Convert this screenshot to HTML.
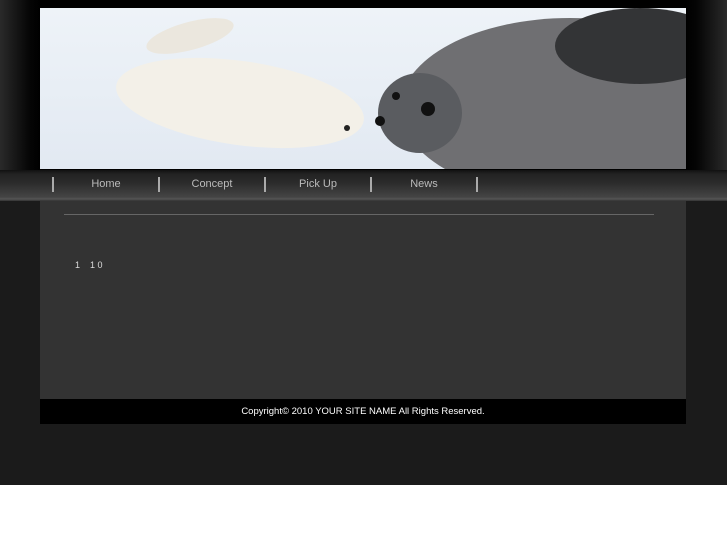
<!DOCTYPE html>
<html><head><style>
body{margin:0;width:727px;height:545px;background:#fff;font-family:"Liberation Sans",sans-serif;position:relative;overflow:hidden}
#bg{position:absolute;left:0;top:0;width:727px;height:485px;background:#1b1b1b}
#top{position:absolute;left:0;top:0;width:727px;height:170px;background:linear-gradient(90deg,#2a2a2a 0,#050505 30px,#000 40px,#000 686px,#050505 697px,#2a2a2a 727px)}
#img{position:absolute;left:40px;top:8px;width:646px;height:161px}
#nav{position:absolute;left:0;top:170px;width:727px;height:31px;background:linear-gradient(#111 0,#222 4px,#2a2a2a 12px,#444 27px,#555 29px,#333 31px)}
.sep{position:absolute;top:7px;width:2px;height:15px;background:#aaa}
.nl{position:absolute;top:8px;font-size:11px;color:#bbb;width:104px;text-align:center}
#main{position:absolute;left:40px;top:201px;width:646px;height:198px;background:#333}
#hr{position:absolute;left:24px;top:13px;width:590px;height:1px;background:#666}
#foot{position:absolute;left:40px;top:399px;width:646px;height:25px;background:#000;color:#fff;font-size:9.5px;text-align:center;line-height:25px}
</style></head><body>
<div id="bg"></div><div id="top"></div>
<svg id="img" viewBox="0 0 646 161">
<defs><linearGradient id="s" x1="0" y1="0" x2="0" y2="1"><stop offset="0" stop-color="#eef3f8"/><stop offset="1" stop-color="#e2e9f2"/></linearGradient></defs>
<rect width="646" height="161" fill="url(#s)"/>
<ellipse cx="200" cy="95" rx="125" ry="42" fill="#f3f0e8" transform="rotate(8 200 95)"/>
<ellipse cx="150" cy="28" rx="45" ry="14" fill="#ebe7de" transform="rotate(-15 150 28)"/>
<ellipse cx="530" cy="100" rx="170" ry="90" fill="#6f6f72"/>
<ellipse cx="600" cy="38" rx="85" ry="38" fill="#333436"/>
<ellipse cx="380" cy="105" rx="42" ry="40" fill="#5a5c60"/>
<circle cx="388" cy="101" r="7" fill="#111"/><circle cx="356" cy="88" r="4" fill="#111"/>
<circle cx="340" cy="113" r="5" fill="#111"/>
<circle cx="307" cy="120" r="3" fill="#222"/>
</svg>
<div id="nav">
<div class="sep" style="left:52px"></div><div class="sep" style="left:158px"></div><div class="sep" style="left:264px"></div><div class="sep" style="left:370px"></div><div class="sep" style="left:476px"></div>
<div class="nl" style="left:54px">Home</div><div class="nl" style="left:160px">Concept</div><div class="nl" style="left:266px">Pick Up</div><div class="nl" style="left:372px">News</div>
</div>
<div id="main"><div id="hr"></div>
<div style="position:absolute;left:35px;top:59px;font-size:9px;color:#ddd">1&nbsp;&nbsp;&nbsp;&nbsp;1 0</div></div>
<div id="foot">Copyright© 2010 YOUR SITE NAME All Rights Reserved.</div>
</body></html>
